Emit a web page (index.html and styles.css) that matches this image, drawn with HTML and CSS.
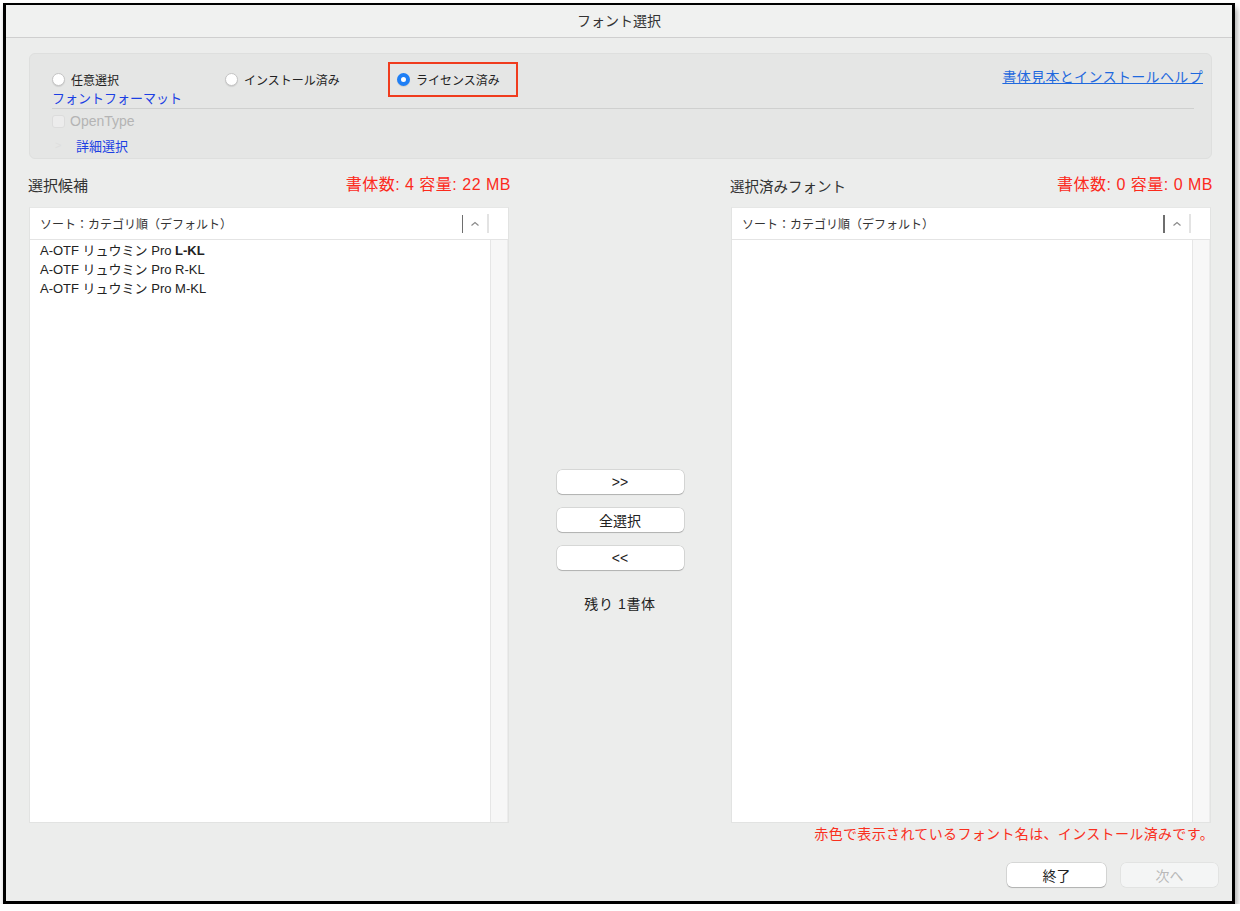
FILE: index.html
```html
<!DOCTYPE html>
<html lang="ja">

<head>
    <meta charset="UTF-8">
    <meta name="viewport" content="width=device-width, initial-scale=1.0">
    <title>フォント選択</title>
    <link rel="stylesheet" href="styles.css">
</head>

<body>
    <div class="window">
        <div class="titlebar">フォント選択</div>

        <div class="content">
            <div class="panel">
                <div class="filter-row">
                    <label class="radio-item first"><span class="radio"></span>任意選択</label>
                    <label class="radio-item second"><span class="radio"></span>インストール済み</label>
                    <label class="radio-item highlighted"><span class="radio checked"></span>ライセンス済み</label>
                    <a class="help-link" href="#">書体見本とインストールヘルプ</a>
                </div>
                <div class="format-title">フォントフォーマット</div>
                <div class="separator"></div>
                <div class="check-row"><span class="checkbox"></span>OpenType</div>
                <div class="detail-row"><span class="disclosure">&gt;</span>詳細選択</div>
            </div>

            <div class="lists">
                <div class="colhead">
                    <span class="heading">選択候補</span>
                    <span class="count">書体数: 4 容量: 22 MB</span>
                </div>
                <div></div>
                <div class="colhead">
                    <span class="heading right-heading">選択済みフォント</span>
                    <span class="count">書体数: 0 容量: 0 MB</span>
                </div>

                <div class="listbox">
                    <div class="list-header">
                        <span class="sort-label">ソート：カテゴリ順（デフォルト）</span>
                        <span class="sort-bar"></span>
                        <svg class="chevron" width="24" height="10" viewBox="0 0 24 10"><polyline points="8.5,6.5 12,3.5 15.5,6.5" fill="none" stroke="#8a8a8a" stroke-width="1.2"/></svg>
                        <span class="end-bar"></span>
                    </div>
                    <div class="list-body">
                        <div class="items">
                            <div class="item">A-OTF リュウミン Pro <b>L-KL</b></div>
                            <div class="item">A-OTF リュウミン Pro R-KL</div>
                            <div class="item">A-OTF リュウミン Pro M-KL</div>
                        </div>
                        <div class="scrolltrack"></div>
                    </div>
                </div>

                <div class="middle">
                    <button class="mid-btn">&gt;&gt;</button>
                    <button class="mid-btn">全選択</button>
                    <button class="mid-btn">&lt;&lt;</button>
                    <div class="remaining">残り 1書体</div>
                </div>

                <div class="listbox">
                    <div class="list-header">
                        <span class="sort-label">ソート：カテゴリ順（デフォルト）</span>
                        <span class="sort-bar thick"></span>
                        <svg class="chevron" width="24" height="10" viewBox="0 0 24 10"><polyline points="8.5,6.5 12,3.5 15.5,6.5" fill="none" stroke="#8a8a8a" stroke-width="1.2"/></svg>
                        <span class="end-bar"></span>
                    </div>
                    <div class="list-body">
                        <div class="items"></div>
                        <div class="scrolltrack"></div>
                    </div>
                </div>
            </div>

            <div class="note">赤色で表示されているフォント名は、インストール済みです。</div>

            <div class="footer">
                <button class="foot-btn">終了</button>
                <button class="foot-btn disabled">次へ</button>
            </div>
        </div>
    </div>
</body>

</html>
```

FILE: styles.css
```css
body {
    margin: 0;
    background: #ffffff;
    font-family: "Liberation Sans", "Noto Sans CJK JP", sans-serif;
    color: #222;
}

.window {
    margin: 3px 0 0 3px;
    width: 1232px;
    height: 901px;
    box-sizing: border-box;
    border: 3px solid #000;
    border-top-width: 2px;
    background: #ecedec;
    box-shadow: 2px 5px 6px rgba(0, 0, 0, 0.35);
    display: flex;
    flex-direction: column;
}

.titlebar {
    height: 32px;
    line-height: 32px;
    text-align: center;
    font-size: 14px;
    color: #333;
    background: #f0f1f0;
    border-bottom: 1px solid #cfcfcf;
}

.content {
    padding: 15px 20px 0 23px;
}

/* filter panel */
.panel {
    height: 106px;
    box-sizing: border-box;
    border: 1px solid #dedfde;
    border-radius: 6px;
    background: #e5e6e5;
    padding: 8px 17px 0 22px;
}

.filter-row {
    display: flex;
    align-items: center;
    height: 35px;
}

.radio-item {
    display: flex;
    align-items: center;
    font-size: 12px;
    color: #222;
}

.radio-item.first {
    width: 173px;
}

.radio-item.second {
    width: 163px;
}

.radio-item.highlighted {
    box-sizing: border-box;
    width: 130px;
    height: 35px;
    border: 2px solid #f03c1e;
    padding-left: 7px;
}

.radio {
    width: 13px;
    height: 13px;
    box-sizing: border-box;
    border-radius: 50%;
    background: #fff;
    border: 1px solid #c4c4c4;
    box-shadow: 0 1px 1px rgba(0, 0, 0, 0.1);
    margin-right: 6px;
}

.radio.checked {
    background: #fff;
    border: 4px solid #1f7ff5;
}

.help-link {
    margin-left: auto;
    margin-right: -9px;
    align-self: flex-start;
    margin-top: 4px;
    font-size: 14px;
    letter-spacing: 0.35px;
    color: #1f69de;
    text-decoration: underline;
}

.format-title {
    margin-top: -5px;
    height: 14px;
    line-height: 14px;
    font-size: 13px;
    color: #1c3fe3;
}

.separator {
    margin-top: 2px;
    height: 1px;
    background: #cfd0cf;
}

.check-row {
    display: flex;
    align-items: center;
    height: 24px;
    font-size: 14px;
    color: #b4b4b4;
}

.checkbox {
    width: 13px;
    height: 13px;
    box-sizing: border-box;
    border: 1px solid #dcdcdc;
    border-radius: 3px;
    background: #ececec;
    margin-right: 5px;
}

.detail-row {
    display: flex;
    align-items: center;
    height: 16px;
    margin-top: 4px;
    font-size: 13px;
    color: #1c3fe3;
}

.disclosure {
    color: #dedede;
    font-size: 11px;
    width: 24px;
    padding-left: 3px;
    box-sizing: border-box;
}

/* lists */
.lists {
    display: grid;
    grid-template-columns: 480px 222px 480px;
    grid-template-rows: 48px 616px;
}

.colhead {
    display: flex;
    justify-content: space-between;
    align-items: center;
}

.heading {
    font-size: 15px;
    color: #333;
    margin-left: -1px;
    margin-top: 2px;
}

.right-heading {
    font-size: 14.5px;
    margin-top: 4px;
}

.count {
    font-size: 16px;
    letter-spacing: 0.5px;
    color: #fc2a1c;
    margin-right: -2px;
}

.listbox {
    display: flex;
    flex-direction: column;
    border: 1px solid #e2e3e2;
    border-top-color: #e6e7e6;
    background: #fff;
}

.list-header {
    height: 31px;
    display: flex;
    align-items: center;
    border-bottom: 1px solid #e4e4e4;
    padding-left: 10px;
}

.sort-label {
    font-size: 12px;
    color: #333;
    flex: 1;
}

.sort-bar {
    width: 1px;
    height: 18px;
    background: #6e6e6e;
}

.sort-bar.thick {
    width: 2px;
}

.chevron {
    display: block;
}

.end-bar {
    width: 2px;
    height: 19px;
    background: #e3e3e3;
    margin-right: 19px;
}

.list-body {
    flex: 1;
    display: flex;
}

.items {
    flex: 1;
    padding: 1px 0 0 10px;
}

.item {
    font-size: 13px;
    line-height: 19px;
    color: #222;
}

.item b {
    font-weight: 600;
}

.scrolltrack {
    width: 16px;
    background: #f7f7f7;
    border-left: 1px solid #e6e6e6;
    border-right: 1px solid #ececec;
}

.middle {
    display: flex;
    flex-direction: column;
    align-items: center;
    padding-top: 263px;
}

.mid-btn {
    width: 127px;
    height: 24px;
    margin-bottom: 14px;
    border: none;
    border-radius: 5px;
    background: #fff;
    box-shadow: 0 0 0 0.5px rgba(0, 0, 0, 0.18), 0 1px 1px rgba(0, 0, 0, 0.18);
    font-family: "Liberation Sans", "Noto Sans CJK JP", sans-serif;
    font-size: 14px;
    color: #222;
}

.remaining {
    margin-top: 9px;
    font-size: 14px;
    letter-spacing: 0.6px;
    color: #222;
}

.note {
    margin-top: 3px;
    text-align: right;
    margin-right: -2px;
    font-size: 14px;
    letter-spacing: 0.35px;
    line-height: 16px;
    color: #f9301e;
}

.footer {
    display: flex;
    justify-content: flex-end;
    gap: 15px;
    margin-top: 21px;
    margin-right: -6px;
}

.foot-btn {
    width: 99px;
    height: 24px;
    border: none;
    border-radius: 5px;
    background: #fff;
    box-shadow: 0 0 0 0.5px rgba(0, 0, 0, 0.18), 0 1px 1px rgba(0, 0, 0, 0.18);
    font-family: "Liberation Sans", "Noto Sans CJK JP", sans-serif;
    font-size: 14px;
    color: #222;
}

.foot-btn.disabled {
    width: 97px;
    background: #f4f5f5;
    color: #b8b8b8;
    box-shadow: 0 0 0 0.5px rgba(0, 0, 0, 0.08);
}
```
